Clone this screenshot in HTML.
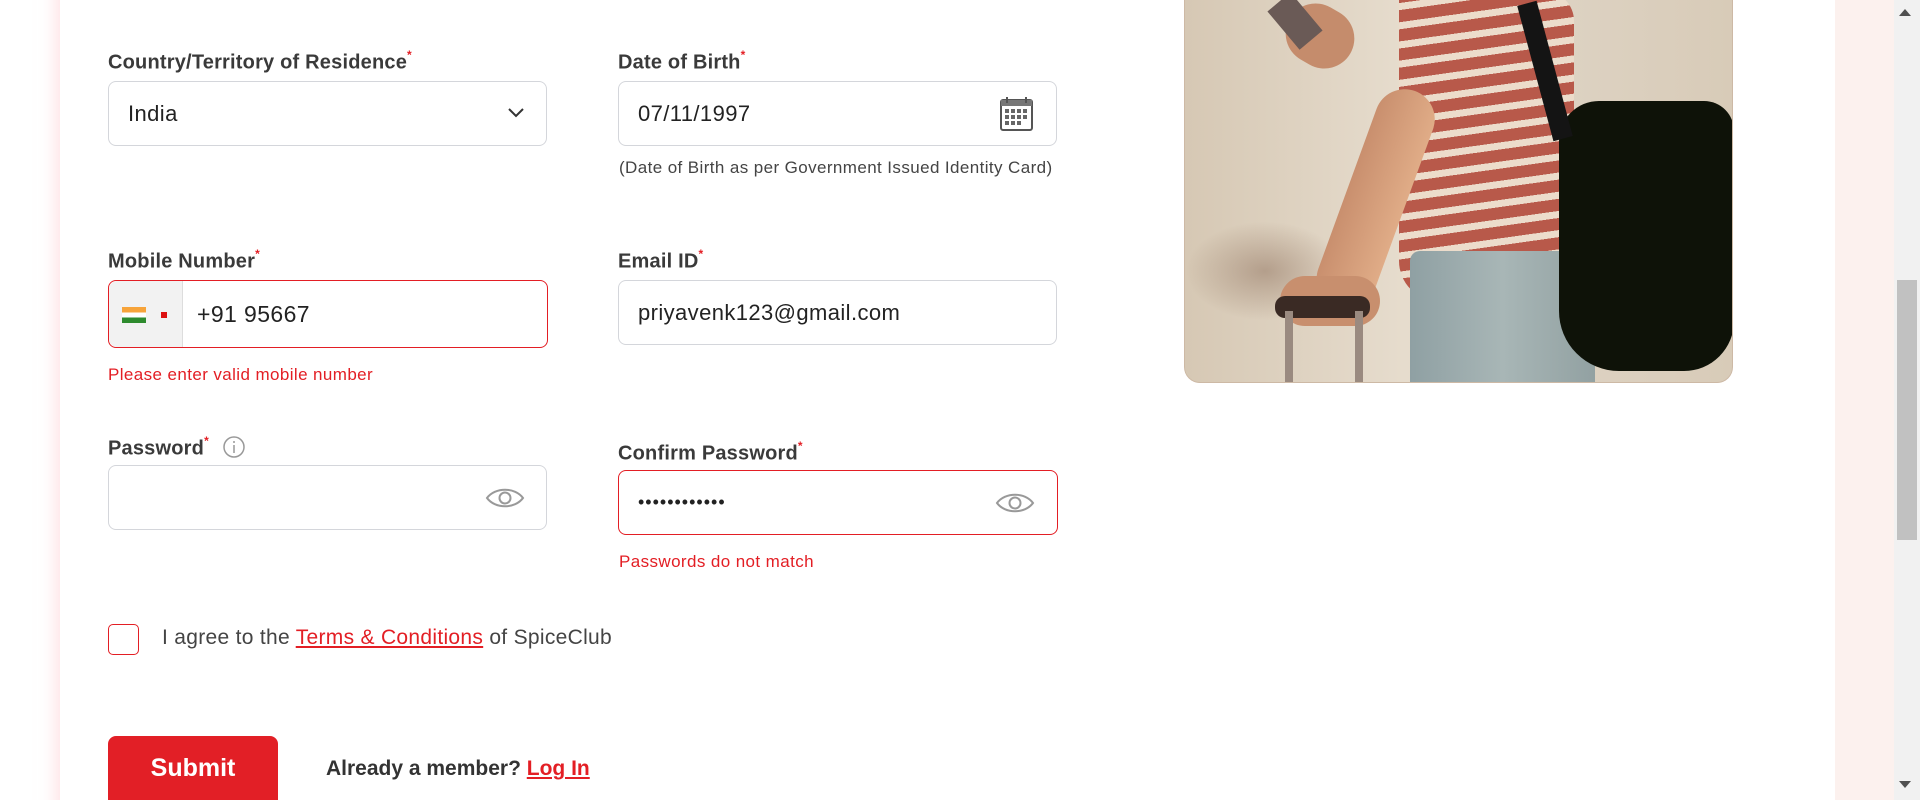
<!DOCTYPE html>
<html><head><meta charset="utf-8">
<style>
*{margin:0;padding:0;box-sizing:border-box}
html,body{width:1920px;height:800px;overflow:hidden;background:#fff;font-family:"Liberation Sans",sans-serif;color:#333}
#w{position:relative;width:1920px;height:800px;overflow:hidden}
.abs{position:absolute}
.card{position:absolute;left:60px;top:-20px;width:1775px;height:860px;background:#fff;box-shadow:0 0 16px 4px rgba(255,200,205,.55)}
.rightbg{position:absolute;left:1835px;top:0;width:59px;height:800px;background:#fcf1ee}
.sb{position:absolute;left:1894px;top:0;width:26px;height:800px;background:#f1f1f1}
.thumb{position:absolute;left:1897px;top:280px;width:20px;height:260px;background:#c1c1c1}
.lbl{position:absolute;font-size:20px;font-weight:bold;color:#3a3a3a;letter-spacing:.2px}
.lbl sup{color:#e31e24;font-size:12px;position:relative;top:-2px}
.inp{position:absolute;border:1px solid #d4d6db;border-radius:8px;background:#fff;font-size:22px;letter-spacing:.4px;color:#222;display:flex;align-items:center;padding-left:19px}
.err{border-color:#e31e24}
.em{position:absolute;font-size:17px;letter-spacing:.4px;color:#e31e24}
</style></head><body><div id="w">
<div class="card"></div>
<div class="rightbg"></div>
<div class="sb"></div><div class="thumb"></div>
<div class="abs" style="left:1899px;top:9px;width:0;height:0;border-left:6px solid transparent;border-right:6px solid transparent;border-bottom:7px solid #505050"></div>
<div class="abs" style="left:1899px;top:781px;width:0;height:0;border-left:6px solid transparent;border-right:6px solid transparent;border-top:7px solid #505050"></div>

<div class="lbl" style="left:108px;top:50px">Country/Territory of Residence<sup>*</sup></div>
<div class="inp" style="left:108px;top:81px;width:439px;height:65px">India
<svg class="abs" style="left:398px;top:25px" width="18" height="12" viewBox="0 0 18 12"><path d="M2 2l7 7 7-7" fill="none" stroke="#333" stroke-width="2"/></svg></div>

<div class="lbl" style="left:618px;top:50px">Date of Birth<sup>*</sup></div>
<div class="inp" style="left:618px;top:81px;width:439px;height:65px">07/11/1997
<svg class="abs" style="left:380px;top:13px" width="36" height="38" viewBox="0 0 36 38"><rect x="2" y="5" width="31" height="30" rx="2" fill="#fff" stroke="#555" stroke-width="2"/><rect x="2" y="5" width="31" height="6" fill="#777"/><path d="M8 2v6M27 2v6" stroke="#555" stroke-width="2"/><g fill="#666"><rect x="6" y="14" width="4" height="4"/><rect x="12" y="14" width="4" height="4"/><rect x="18" y="14" width="4" height="4"/><rect x="24" y="14" width="4" height="4"/><rect x="6" y="20" width="4" height="4"/><rect x="12" y="20" width="4" height="4"/><rect x="18" y="20" width="4" height="4"/><rect x="24" y="20" width="4" height="4"/><rect x="6" y="26" width="4" height="4"/><rect x="12" y="26" width="4" height="4"/><rect x="18" y="26" width="4" height="4"/></g></svg></div>
<div class="abs" style="left:619px;top:158px;font-size:17px;letter-spacing:.4px;color:#444">(Date of Birth as per Government Issued Identity Card)</div>

<div class="lbl" style="left:108px;top:249px">Mobile Number<sup>*</sup></div>
<div class="inp err" style="left:108px;top:280px;width:440px;height:68px;padding-left:0">
<div style="width:74px;height:100%;background:#f2f2f2;border-right:1px solid #ddd;border-radius:8px 0 0 8px;position:relative">
<div class="abs" style="left:13px;top:26px;width:24px;height:16px;background:linear-gradient(#f7a43b 0 33%,#fff 33% 66%,#2e8b2e 66%)"></div>
<div class="abs" style="left:52px;top:31px;width:6px;height:6px;background:#d11"></div></div>
<span style="margin-left:14px;font-size:23px">+91 95667</span></div>
<div class="em" style="left:108px;top:365px">Please enter valid mobile number</div>

<div class="lbl" style="left:618px;top:249px">Email ID<sup>*</sup></div>
<div class="inp" style="left:618px;top:280px;width:439px;height:65px">priyavenk123@gmail.com</div>

<div class="lbl" style="left:108px;top:436px">Password<sup>*</sup></div>
<svg class="abs" style="left:222px;top:435px" width="24" height="24" viewBox="0 0 24 24"><circle cx="12" cy="12" r="10" fill="none" stroke="#999" stroke-width="1.5"/><path d="M12 10v8" stroke="#999" stroke-width="1.5"/><circle cx="12" cy="7" r="1" fill="#999"/></svg>
<div class="inp" style="left:108px;top:465px;width:439px;height:65px">
<svg class="abs" style="left:376px;top:20px" width="40" height="24" viewBox="0 0 40 24"><path d="M2 12C10 1 30 1 38 12C30 23 10 23 2 12Z" fill="none" stroke="#999" stroke-width="2"/><circle cx="20" cy="12" r="5.5" fill="none" stroke="#999" stroke-width="2"/></svg></div>

<div class="lbl" style="left:618px;top:441px">Confirm Password<sup>*</sup></div>
<div class="inp err" style="left:618px;top:470px;width:440px;height:65px"><span style="font-size:18px;letter-spacing:1px">••••••••••••</span>
<svg class="abs" style="left:376px;top:20px" width="40" height="24" viewBox="0 0 40 24"><path d="M2 12C10 1 30 1 38 12C30 23 10 23 2 12Z" fill="none" stroke="#999" stroke-width="2"/><circle cx="20" cy="12" r="5.5" fill="none" stroke="#999" stroke-width="2"/></svg></div>
<div class="em" style="left:619px;top:552px">Passwords do not match</div>

<div class="abs" style="left:108px;top:624px;width:31px;height:31px;border:1.5px solid #e31e24;border-radius:5px"></div>
<div class="abs" style="left:162px;top:626px;font-size:21px;letter-spacing:.3px;color:#444">I agree to the <span style="color:#e31e24;text-decoration:underline">Terms &amp; Conditions</span> of SpiceClub</div>

<div class="abs" style="left:108px;top:736px;width:170px;height:64px;background:#e21f26;border-radius:8px 8px 0 0;color:#fff;font-size:25px;font-weight:bold;text-align:center;line-height:64px">Submit</div>
<div class="abs" style="left:326px;top:757px;font-size:21px;font-weight:bold;color:#333">Already a member? <span style="color:#e31e24;text-decoration:underline">Log In</span></div>

<div class="abs" style="left:1184px;top:-10px;width:549px;height:393px;border-radius:0 0 16px 16px;overflow:hidden;background:linear-gradient(90deg,#d6c8b4,#e6dccd 40%,#ddd2c2 70%,#d8cbb8);border:1px solid #cdb9a5">
<div class="abs" style="left:0;top:230px;width:160px;height:100px;background:radial-gradient(ellipse at 50% 50%,rgba(140,110,90,.5),transparent 70%)"></div>
<div class="abs" style="left:214px;top:0;width:175px;height:310px;border-radius:0 30px 20px 40px;background:repeating-linear-gradient(172deg,#b8594a 0 12px,#ecdccb 12px 19px)"></div>
<div class="abs" style="left:225px;top:260px;width:185px;height:140px;background:linear-gradient(90deg,#8fa0a3,#a8b6b6,#92a1a2);border-radius:10px 20px 0 0"></div>
<div class="abs" style="left:200px;top:100px;width:60px;height:230px;background:linear-gradient(90deg,#c98f6e,#e0ac87);transform:rotate(20deg);transform-origin:top;border-radius:30px"></div>
<div class="abs" style="left:95px;top:285px;width:100px;height:50px;background:#c88f6e;border-radius:25px"></div>
<div class="abs" style="left:90px;top:305px;width:95px;height:22px;background:#3a2a24;border-radius:10px"></div>
<div class="abs" style="left:100px;top:320px;width:8px;height:80px;background:#9a8a80"></div>
<div class="abs" style="left:170px;top:320px;width:8px;height:80px;background:#9a8a80"></div>
<div class="abs" style="left:374px;top:110px;width:175px;height:270px;background:#0e1208;border-radius:40px 30px 50px 60px"></div>
<div class="abs" style="left:350px;top:10px;width:20px;height:140px;background:#141414;transform:rotate(-15deg)"></div>
<div class="abs" style="left:100px;top:15px;width:70px;height:60px;background:#c58c6c;border-radius:30px;transform:rotate(30deg)"></div>
<div class="abs" style="left:95px;top:5px;width:30px;height:50px;background:#6a5a56;transform:rotate(-40deg)"></div>
</div>
</div></body></html>
